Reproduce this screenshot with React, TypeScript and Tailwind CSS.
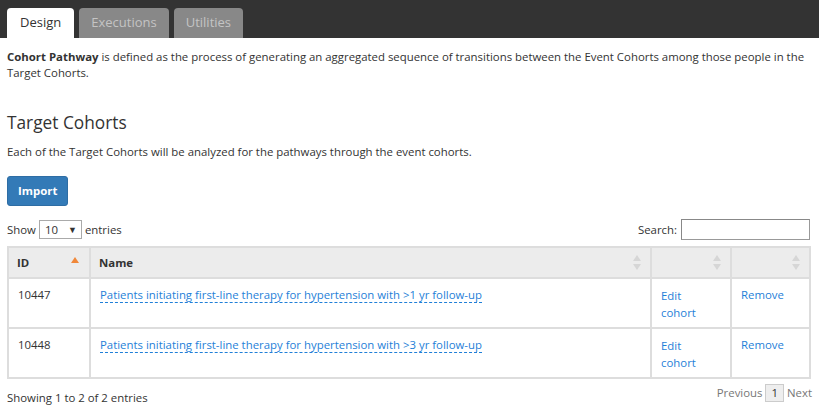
import React from "react";

const rows = [
  { id: 10447, name: "Patients initiating first-line therapy for hypertension with >1 yr follow-up" },
  { id: 10448, name: "Patients initiating first-line therapy for hypertension with >3 yr follow-up" },
];

const SortIcon = ({ active }: { active?: boolean }) =>
  active ? (
    <svg width="8" height="6" viewBox="0 0 8 6" className="absolute right-[10px] top-[9px]">
      <path d="M4 0 L8 6 L0 6 Z" fill="#f0883a" />
    </svg>
  ) : (
    <svg width="8" height="16" viewBox="0 0 8 16" className="absolute right-[9px] top-[7px]">
      <path d="M4 0 L8 6 L0 6 Z" fill="#d6d6d6" />
      <path d="M4 15 L8 9 L0 9 Z" fill="#d6d6d6" />
    </svg>
  );

const App = () => {
  return (
    <div className="w-[819px] h-[408px] overflow-hidden bg-white text-[#333] text-[11.4px] font-['Open_Sans',sans-serif]">
      <div className="h-[38px] bg-[#333] flex items-end gap-[5px] px-[7px]">
        <div className="h-[30px] px-[13px] bg-white rounded-t-[4px] text-[13px] text-[#333] flex items-center">Design</div>
        <div className="h-[30px] px-[12px] bg-[#888] rounded-t-[4px] text-[13px] text-[#c4c4c4] flex items-center">Executions</div>
        <div className="h-[30px] px-[12px] bg-[#888] rounded-t-[4px] text-[13px] text-[#c4c4c4] flex items-center">Utilities</div>
      </div>
      <div className="px-[7px]">
        <p className="mt-[11px] leading-[16px]">
          <b>Cohort Pathway</b> is defined as the process of generating an aggregated sequence of transitions between the Event Cohorts among those people in the Target Cohorts.
        </p>
        <h3 className="mt-[31px] text-[17.3px] leading-[22px]">Target Cohorts</h3>
        <p className="mt-[10px] leading-[16px]">Each of the Target Cohorts will be analyzed for the pathways through the event cohorts.</p>
        <button className="mt-[16px] h-[30px] px-[10px] bg-[#337ab7] border border-[#2e6da4] rounded-[3px] text-white font-bold">Import</button>
        <div className="mt-[13px] flex items-center justify-between">
          <div className="flex items-center gap-[3px]">
            <span>Show</span>
            <div className="w-[43px] h-[19px] border border-[#aaa] flex items-center justify-between pl-[5px] pr-[4px]">
              <span>10</span>
              <span className="text-[9px]">▼</span>
            </div>
            <span>entries</span>
          </div>
          <div className="flex items-center gap-[4px] pr-[2px]">
            <span>Search:</span>
            <div className="w-[129px] h-[21px] border border-[#999] border-t-[#888] border-l-[#888]" />
          </div>
        </div>
        <table className="mt-[6px] w-[804px] border-collapse border-2 border-[#ddd]">
          <thead>
            <tr className="bg-[#ececec] h-[31px]">
              <th className="relative w-[82px] border-2 border-[#ddd] text-left font-bold px-[8px]">ID<SortIcon active /></th>
              <th className="relative w-[561px] border-2 border-[#ddd] text-left font-bold px-[8px]">Name<SortIcon /></th>
              <th className="relative w-[80px] border-2 border-[#ddd]"><SortIcon /></th>
              <th className="relative border-2 border-[#ddd]"><SortIcon /></th>
            </tr>
          </thead>
          <tbody>
            {rows.map((r) => (
              <tr key={r.id} className="h-[50px] align-top">
                <td className="border-2 border-[#ddd] px-[9px] pt-[8px] leading-[16px]">{r.id}</td>
                <td className="border-2 border-[#ddd] px-[9px] pt-[8px] leading-[16px]">
                  <span className="text-[#1f7fd8] border-b border-dashed border-[#1f7fd8]">{r.name}</span>
                </td>
                <td className="border-2 border-[#ddd] px-[9px] pt-[8px] leading-[17px] text-[#1f7fd8]">
                  Edit<br />cohort
                </td>
                <td className="border-2 border-[#ddd] px-[9px] pt-[8px] leading-[16px] text-[#1f7fd8]">Remove</td>
              </tr>
            ))}
          </tbody>
        </table>
        <div className="flex justify-between items-start mt-[5px]">
          <span className="mt-[5px]">Showing 1 to 2 of 2 entries</span>
          <div className="flex items-center gap-[3px] text-[#777]">
            <span>Previous</span>
            <span className="border border-[#ccc] bg-[#eee] px-[5px] leading-[16px] text-[#333]">1</span>
            <span>Next</span>
          </div>
        </div>
      </div>
    </div>
  );
};

export default App;
